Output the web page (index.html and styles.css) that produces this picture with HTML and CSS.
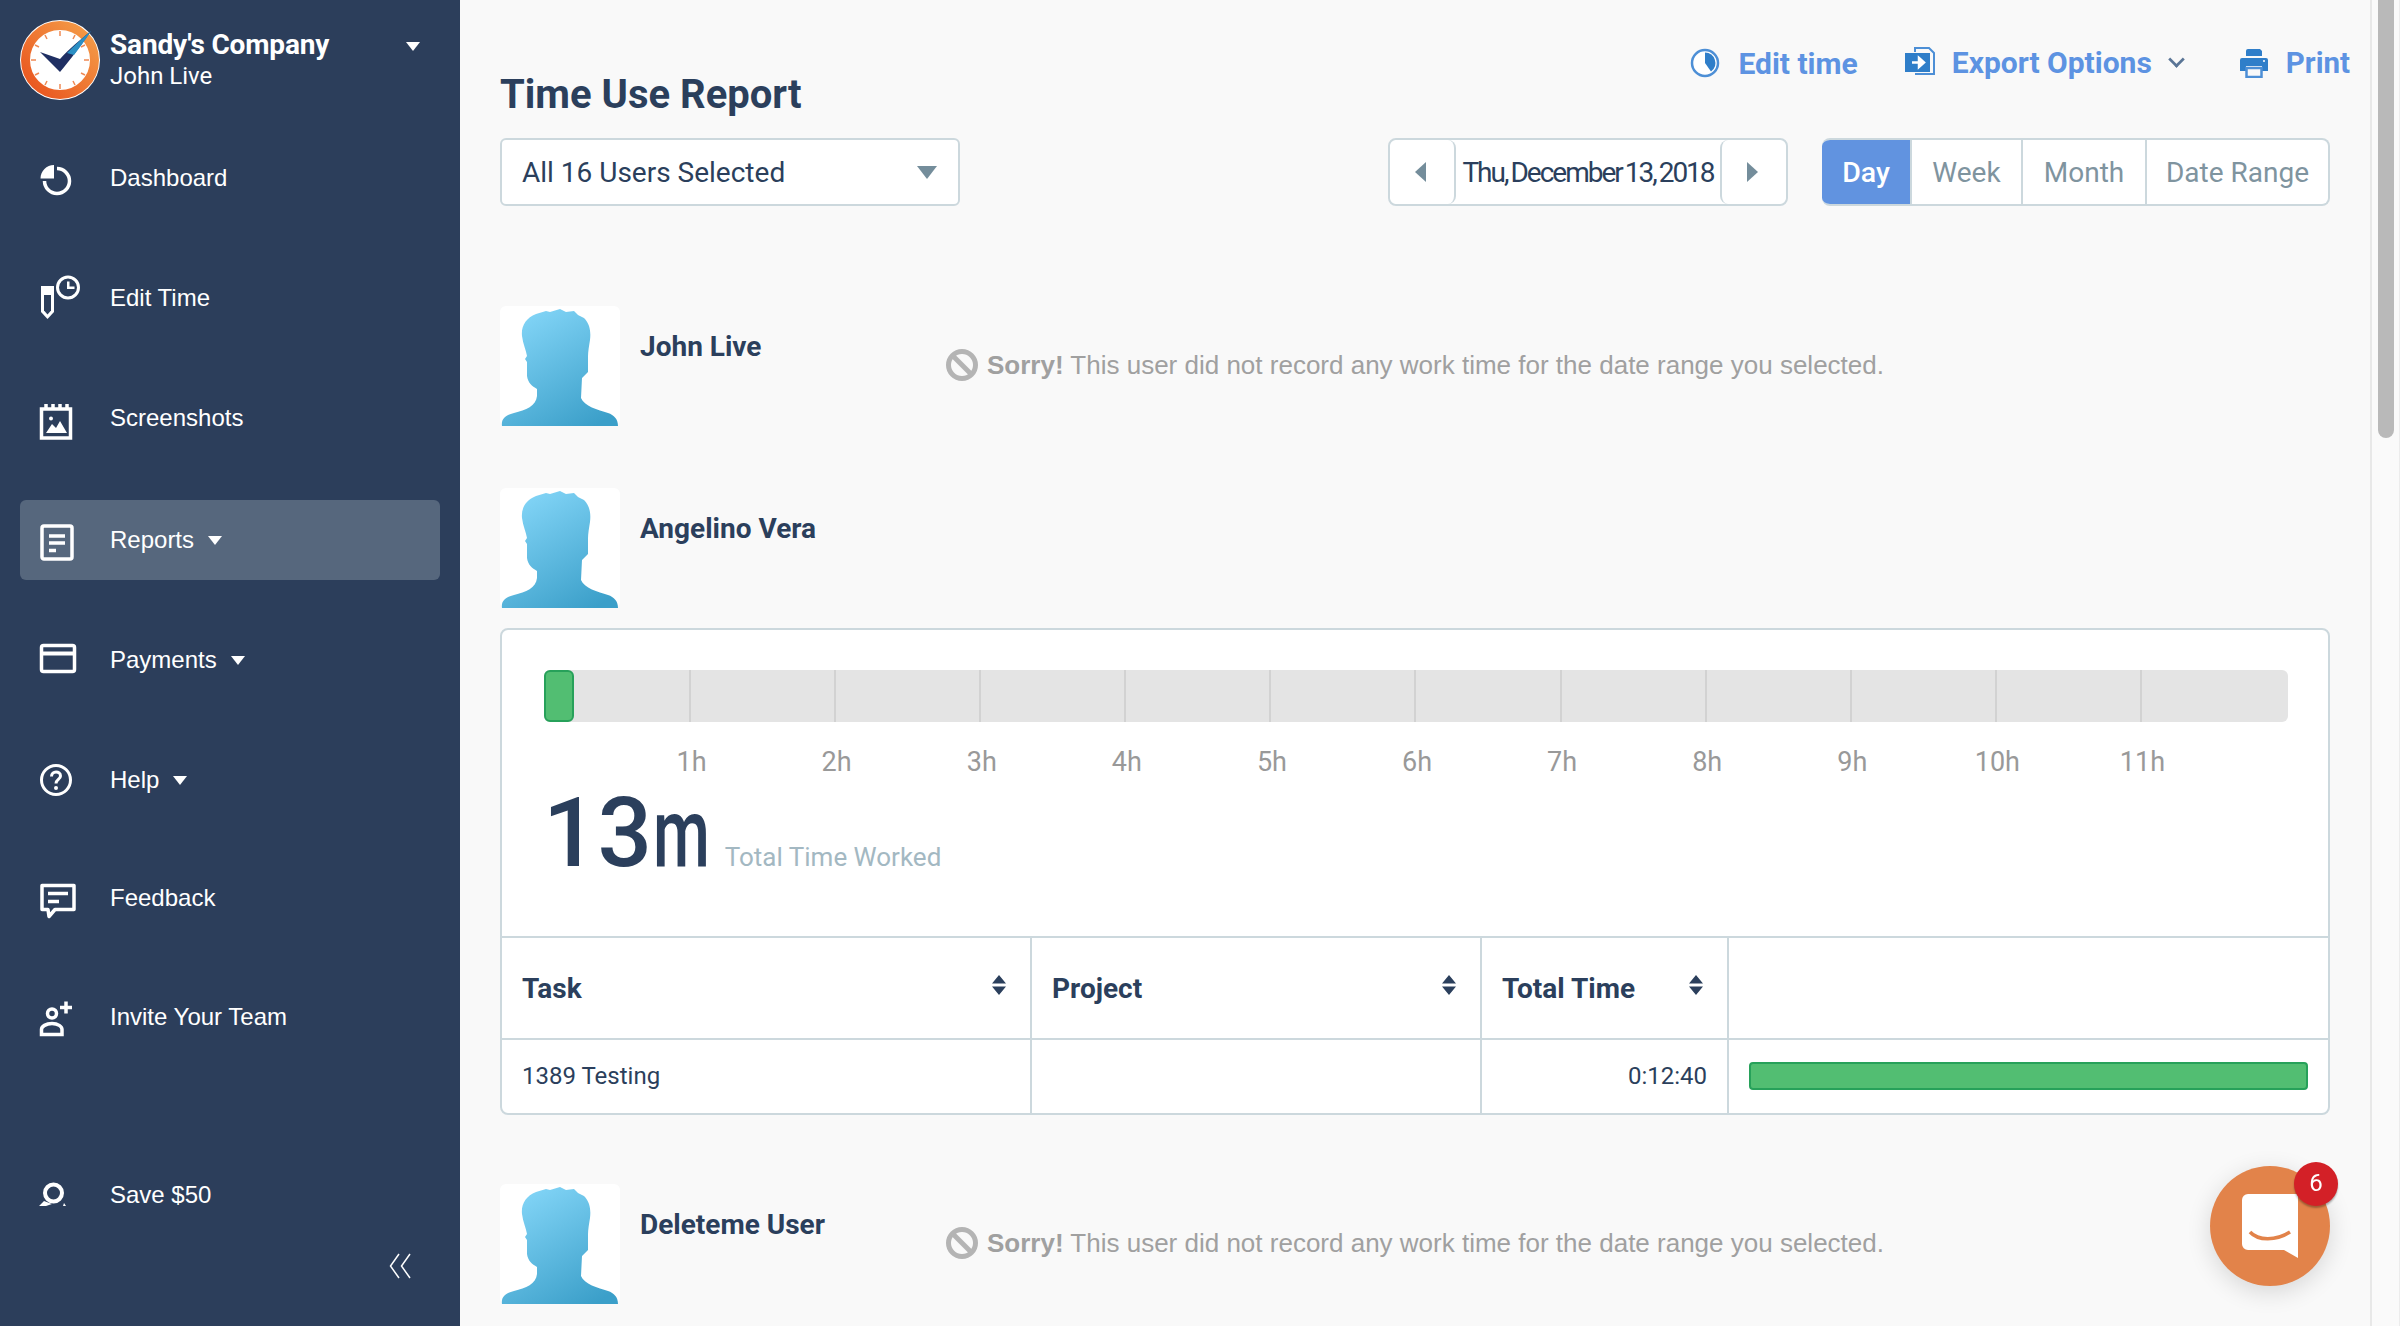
FILE: index.html
```html
<!DOCTYPE html>
<html lang="en">
<head>
<meta charset="UTF-8">
<title>Time Use Report</title>
<link rel="stylesheet" href="styles.css">
</head>
<body>
  <svg class="defs" width="0" height="0">
    <defs>
      <linearGradient id="avatarFill" x1="0.2" y1="0" x2="0.8" y2="1">
        <stop offset="0" stop-color="#84d6f8"/>
        <stop offset="1" stop-color="#3b9fc9"/>
      </linearGradient>
      <linearGradient id="ringFill" x1="0" y1="1" x2="1" y2="0">
        <stop offset="0" stop-color="#e8501c"/>
        <stop offset="1" stop-color="#f5a04a"/>
      </linearGradient>
      <symbol id="avatar" viewBox="0 0 120 120">
        <rect width="120" height="120" rx="6" fill="#fff"/>
        <path fill="url(#avatarFill)" d="M2 120 C1 113 5 109 14 107 C26 104 36 100 37 90 L37 83 C32 80 28 77 27 70 L27 56 L25 53 L27 50 C26 44 23 38 22 30 C21 20 26 12 36 8 L46 5 L50 6 L60 3 L66 6 L74 5 L78 9 L84 12 C90 18 91 26 90 34 C89 40 88 46 88 50 L88 66 L82 72 L81 92 C84 100 98 104 108 107 C114 109 118 113 118 120 Z"/>
      </symbol>
      <symbol id="sort" viewBox="0 0 14 20">
        <path fill="#2b3f5c" d="M7 0 L14 8.500 L0 8.500 Z M0 11.500 L14 11.500 L7 20 Z"/>
      </symbol>
      <symbol id="noEntry" viewBox="0 0 34 34">
        <circle cx="17" cy="17" r="13.500" fill="none" stroke="#b4b4b4" stroke-width="5"/>
        <path d="M8 8 L26 26" stroke="#b4b4b4" stroke-width="5"/>
      </symbol>
    </defs>
  </svg>

  <div class="app">
    <aside class="sidebar">
      <div class="brand">
        <svg class="logo" viewBox="0 0 80 80">
          <circle cx="40" cy="40" r="40" fill="#fff"/>
          <circle cx="40" cy="40" r="34.500" fill="#fff" stroke="url(#ringFill)" stroke-width="9"/>
          <path d="M40 11v5M40 64v5M11 40h5M64 40h5M25 15l2 4M55 15l-2 4M15 25l4 2M65 25l-4 2M15 55l4-2M65 55l-4-2M25 65l2-4M55 65l-2-4" stroke="#ef8a55" stroke-width="1.500"/>
          <path d="M20 32 L40 39 C50 28 60 20 71 11 C60 27 50 40 40 52 Z" fill="#1f2f63"/>
          <path d="M47 33 C55 25 62 18 71 11 C66 19 60 27 54 35 Z" fill="#2b8fc4"/>
        </svg>
        <div class="brand-text">
          <div class="company">Sandy's Company</div>
          <div class="brand-user">John Live</div>
        </div>
        <span class="caret caret-brand"></span>
      </div>

      <nav class="nav">
        <a class="nav-item">
          <svg class="nav-icon" viewBox="0 -2.500 40 40">
            <path d="M4.500 19.500 A12.500 12.500 0 1 0 17 7" fill="none" stroke="#fff" stroke-width="3.500" transform="translate(0 1)"/>
            <path d="M14 4.500 V18 H0.500 C0.500 10.500 6.500 4.500 14 4.500 Z" fill="#fff"/>
          </svg>
          <span>Dashboard</span>
        </a>
        <a class="nav-item">
          <svg class="nav-icon" viewBox="0 0 40 40">
            <path d="M1 8 H14 V34 L7.500 41 L1 34 Z" fill="#fff"/>
            <path d="M4 17 H11 V32.500 L7.500 36.500 L4 32.500 Z" fill="#2c3e5b"/>
            <circle cx="28" cy="9.500" r="10.500" fill="none" stroke="#fff" stroke-width="3"/>
            <path d="M27 3.500 H29.500 V8.500 H34.500 V11 H27 Z" fill="#fff"/>
          </svg>
          <span>Edit Time</span>
        </a>
        <a class="nav-item">
          <svg class="nav-icon" viewBox="0 -5 40 40">
            <path d="M6 1 V5 M13 1 V5 M20 1 V5 M27 1 V5" stroke="#fff" stroke-width="3.500"/>
            <rect x="1.500" y="6" width="29" height="29" fill="none" stroke="#fff" stroke-width="3.500"/>
            <circle cx="11" cy="15.500" r="2" fill="#fff"/>
            <path d="M6 30 L12 21 L16 25 L20 18 L27 30 Z" fill="#fff"/>
          </svg>
          <span>Screenshots</span>
        </a>
        <a class="nav-item active">
          <svg class="nav-icon" viewBox="0 -3 40 40">
            <rect x="2" y="3" width="30" height="33" rx="2" fill="none" stroke="#fff" stroke-width="3.500"/>
            <path d="M9 13 H25 M9 20 H25 M9 27.500 H16" stroke="#fff" stroke-width="3.500"/>
          </svg>
          <span>Reports</span>
          <span class="caret"></span>
        </a>
        <a class="nav-item">
          <svg class="nav-icon" viewBox="0 0 40 40">
            <rect x="1.500" y="5.500" width="33" height="26" rx="2" fill="none" stroke="#fff" stroke-width="3.500"/>
            <path d="M2 13.500 H34" stroke="#fff" stroke-width="4"/>
          </svg>
          <span>Payments</span>
          <span class="caret"></span>
        </a>
        <a class="nav-item">
          <svg class="nav-icon" viewBox="0 0 40 40">
            <circle cx="16" cy="20" r="14.500" fill="none" stroke="#fff" stroke-width="3"/>
            <path d="M11.500 16.500 C11.500 10.500 20.500 10.500 20.500 16 C20.500 19.500 16 19.500 16 23.500" fill="none" stroke="#fff" stroke-width="3"/>
            <circle cx="16" cy="28" r="2" fill="#fff"/>
          </svg>
          <span>Help</span>
          <span class="caret"></span>
        </a>
        <a class="nav-item">
          <svg class="nav-icon" viewBox="0 -2.500 40 40">
            <path d="M2 5 H34 V29 H15 L9 36 L8 29 H2 Z" fill="none" stroke="#fff" stroke-width="3.500" stroke-linejoin="round"/>
            <path d="M8 13 H28 M8 21 H19" stroke="#fff" stroke-width="3.500"/>
          </svg>
          <span>Feedback</span>
        </a>
        <a class="nav-item">
          <svg class="nav-icon" viewBox="0 -1.500 40 40">
            <circle cx="12" cy="15" r="4.500" fill="none" stroke="#fff" stroke-width="3.500"/>
            <path d="M1.500 36 V31 C1.500 28 6 25 12 25 C18 25 22 28 22 31 V36 Z" fill="none" stroke="#fff" stroke-width="3.500"/>
            <path d="M26 3 V15 M20 9 H32" stroke="#fff" stroke-width="3.500"/>
          </svg>
          <span>Invite Your Team</span>
        </a>
      </nav>

      <div class="sidebar-bottom">
        <a class="nav-item">
          <svg class="nav-icon" viewBox="0 0 40 40">
            <circle cx="13.500" cy="18" r="8.500" fill="none" stroke="#fff" stroke-width="4"/>
            <path d="M-1 31 L4 26 L12 29 L6 31 Z M24 28 L26 31 H23 Z" fill="#fff"/>
          </svg>
          <span>Save $50</span>
        </a>
        <svg class="collapse" viewBox="0 0 22 26">
          <path d="M10 1 L1.500 13 L10 25 M21 1 L12.500 13 L21 25" fill="none" stroke="#fff" stroke-width="1.500"/>
        </svg>
      </div>
    </aside>

    <main class="main">
      <div class="page-head">
        <h1 class="title">Time Use Report</h1>
        <div class="actions">
          <a class="action">
            <svg class="action-icon" viewBox="0 0 30 30">
              <circle cx="15" cy="15" r="13" fill="#fff" stroke="#4d8fd6" stroke-width="2.500"/>
              <path d="M15 15 V4.500 A10.500 10.500 0 0 1 21 23.500 Z" fill="#2f7ec9"/>
            </svg>
            Edit time
          </a>
          <a class="action action-export">
            <svg class="action-icon" viewBox="0 0 32 30">
              <path d="M11 5 V1 H25 L30 6 V27 H11" fill="none" stroke="#4d8fd6" stroke-width="2"/>
              <rect x="1" y="6" width="25" height="19" fill="#2f7ec9"/>
              <path d="M8 15.500 H15 M15 11 L20 15.500 L15 20 Z" fill="#fff" stroke="#fff" stroke-width="2.500"/>
            </svg>
            Export Options
            <span class="caret-chevron"></span>
          </a>
          <a class="action action-print">
            <svg class="action-icon" viewBox="0 0 30 30">
              <path d="M7 8 V3 A2 2 0 0 1 9 1 H21 L23 3 V8 Z" fill="#2f7ec9"/>
              <path d="M3 10 H27 A2 2 0 0 1 29 12 V23 H23 V18 H7 V23 H1 V12 A2 2 0 0 1 3 10 Z" fill="#2f7ec9"/>
              <circle cx="25" cy="13" r="1" fill="#fff"/>
              <rect x="7.500" y="20" width="15" height="9" fill="none" stroke="#4d8fd6" stroke-width="2.500"/>
            </svg>
            Print
          </a>
        </div>
      </div>

      <div class="toolbar">
        <div class="user-select">
          All 16 Users Selected
          <span class="select-arrow"></span>
        </div>
        <div class="toolbar-right">
          <div class="date-pick">
            <button class="date-btn"><span class="tri-left"></span></button>
            <span class="date-text">Thu, December 13, 2018</span>
            <button class="date-btn"><span class="tri-right"></span></button>
          </div>
          <div class="ranges">
            <span class="range on">Day</span>
            <span class="range range-week">Week</span>
            <span class="range range-month">Month</span>
            <span class="range range-custom">Date Range</span>
          </div>
        </div>
      </div>

      <section class="user first">
        <svg class="avatar"><use href="#avatar"/></svg>
        <div class="user-name">John Live</div>
        <div class="sorry">
          <svg class="sorry-icon"><use href="#noEntry"/></svg>
          <span><b>Sorry!</b> This user did not record any work time for the date range you selected.</span>
        </div>
      </section>

      <section class="user second">
        <svg class="avatar"><use href="#avatar"/></svg>
        <div class="user-name">Angelino Vera</div>
      </section>

      <div class="card">
        <div class="card-top">
          <div class="timeline">
            <div class="worked"></div>
            <i></i><i></i><i></i><i></i><i></i><i></i><i></i><i></i><i></i><i></i><i></i><i></i>
          </div>
          <div class="hours">
            <span>1h</span><span>2h</span><span>3h</span><span>4h</span><span>5h</span><span>6h</span>
            <span>7h</span><span>8h</span><span>9h</span><span>10h</span><span>11h</span>
          </div>
          <div class="total">
            <span class="total-num">13<span class="total-unit">m</span></span>
            <span class="total-label">Total Time Worked</span>
          </div>
        </div>
        <table class="tasks">
          <thead>
            <tr>
              <th class="col-task">Task<svg class="sort"><use href="#sort"/></svg></th>
              <th class="col-project">Project<svg class="sort"><use href="#sort"/></svg></th>
              <th class="col-time">Total Time<svg class="sort"><use href="#sort"/></svg></th>
              <th></th>
            </tr>
          </thead>
          <tbody>
            <tr>
              <td>1389 Testing</td>
              <td></td>
              <td class="num">0:12:40</td>
              <td><div class="task-bar"></div></td>
            </tr>
          </tbody>
        </table>
      </div>

      <section class="user third">
        <svg class="avatar"><use href="#avatar"/></svg>
        <div class="user-name">Deleteme User</div>
        <div class="sorry">
          <svg class="sorry-icon"><use href="#noEntry"/></svg>
          <span><b>Sorry!</b> This user did not record any work time for the date range you selected.</span>
        </div>
      </section>
    </main>

    <div class="scrollbar"><div class="thumb"></div></div>
  </div>

  <div class="chat">
    <svg class="chat-icon" viewBox="0 0 56 64">
      <path d="M6 0 H56 V64 L42 56 H6 A6 6 0 0 1 0 50 V6 A6 6 0 0 1 6 0 Z" fill="#fff"/>
      <path d="M8 38 C16 47 34 47 48 38" fill="none" stroke="#e2834a" stroke-width="3.500"/>
    </svg>
    <span class="chat-badge">6</span>
  </div>
</body>
</html>
```

FILE: styles.css
```css
html, body {
  margin: 0;
  padding: 0;
  height: 100%;
  overflow: hidden;
}

body {
  font-family: Roboto, "Liberation Sans", sans-serif;
  color: #2b3f5c;
  background-color: #f9f9f9;
}

.defs {
  position: absolute;
}

.app {
  display: flex;
  height: 1326px;
}

/* sidebar */
.sidebar {
  width: 460px;
  flex-shrink: 0;
  background-color: #2c3e5b;
  color: #fff;
  display: flex;
  flex-direction: column;
}

.brand {
  display: flex;
  align-items: center;
  height: 80px;
  margin: 20px 0 38px 20px;
}

.logo {
  width: 80px;
  height: 80px;
  flex-shrink: 0;
}

.brand-text {
  margin: -2px 0 0 10px;
  width: 296px;
}

.company {
  font-size: 28px;
  font-weight: 700;
  letter-spacing: -.15px;
  line-height: 34px;
}

.brand-user {
  font-size: 24px;
  line-height: 28px;
}

.caret {
  display: inline-block;
  width: 0;
  height: 0;
  margin-left: 14px;
  border-left: 7px solid transparent;
  border-right: 7px solid transparent;
  border-top: 9px solid #fff;
}

.caret-brand {
  margin: 0 0 27px;
}

.nav-item {
  display: flex;
  align-items: center;
  height: 80px;
  margin: 0 20px 40px;
  padding-left: 20px;
  border-radius: 6px;
  font-family: "Liberation Sans", Arial, sans-serif;
  font-size: 24px;
}

.nav .nav-item:nth-child(3) {
  margin-bottom: 42px;
}

.nav .nav-item:nth-child(6) {
  margin-bottom: 38px;
}

.nav .nav-item:nth-child(7) {
  margin-bottom: 39px;
}

.nav-item.active {
  background-color: #56677d;
}

.nav-icon {
  width: 40px;
  height: 40px;
  margin-right: 30px;
  flex-shrink: 0;
  overflow: visible;
}

.sidebar-bottom {
  margin-top: 58px;
}

.sidebar-bottom .nav-item {
  margin-bottom: 0;
}

.collapse {
  display: block;
  width: 22px;
  height: 26px;
  margin: 18px 0 0 389px;
}

/* main */
.main {
  flex: 1;
  min-width: 0;
  padding: 0 40px;
}

.page-head {
  display: flex;
  justify-content: space-between;
  height: 138px;
}

.title {
  margin: 71px 0 0;
  font-size: 40px;
  line-height: 48px;
  font-weight: 700;
}

.actions {
  display: flex;
  margin: 42px -20px 0 0;
  height: 42px;
}

.action {
  display: flex;
  align-items: center;
  margin-left: 46px;
  font-size: 30px;
  font-weight: 700;
  color: #5d93e2;
}

.action-export {
  margin-top: -2px;
}

.action-export .action-icon {
  width: 32px;
  margin-right: 16px;
}

.action-print {
  margin-left: 56px;
  font-size: 29.500px;
}

.action-icon {
  width: 30px;
  height: 30px;
  margin-right: 18px;
}

.action-print .action-icon {
  margin-right: 17px;
}

.caret-chevron {
  width: 10px;
  height: 10px;
  margin: -6px 0 0 18px;
  border-right: 3px solid #5a7596;
  border-bottom: 3px solid #5a7596;
  transform: rotate(45deg) scale(.9);
}

.toolbar {
  display: flex;
  justify-content: space-between;
  height: 68px;
}

.user-select {
  display: flex;
  align-items: center;
  justify-content: space-between;
  box-sizing: border-box;
  width: 460px;
  padding: 0 21px 0 20px;
  background-color: #fff;
  border: 2px solid #ccd8dd;
  border-radius: 6px;
  font-size: 28px;
}

.select-arrow {
  width: 0;
  height: 0;
  border-left: 10px solid transparent;
  border-right: 10px solid transparent;
  border-top: 13px solid #748d9b;
}

.toolbar-right {
  display: flex;
  gap: 34px;
}

.date-pick {
  display: flex;
  align-items: center;
  box-sizing: border-box;
  width: 400px;
  background-color: #fff;
  border: 2px solid #ccd8dd;
  border-radius: 8px;
}

.date-btn {
  display: flex;
  align-items: center;
  justify-content: center;
  box-sizing: border-box;
  width: 66px;
  height: 64px;
  padding: 0 3px 0 0;
  margin: 0;
  background-color: #fff;
  border: 0 solid #ccd8dd;
  border-radius: 8px;
  flex-shrink: 0;
}

.date-btn:first-child {
  border-right-width: 2px;
}

.date-btn:last-child {
  border-left-width: 2px;
}

.date-text {
  flex: 1;
  min-width: 0;
  text-align: center;
  white-space: nowrap;
  font-size: 28px;
  letter-spacing: -2px;
  word-spacing: -2px;
}

.tri-left,
.tri-right {
  width: 0;
  height: 0;
  border-top: 10px solid transparent;
  border-bottom: 10px solid transparent;
}

.tri-left {
  border-right: 11px solid #748d9b;
}

.tri-right {
  border-left: 11px solid #748d9b;
}

.ranges {
  display: flex;
  box-sizing: border-box;
  width: 508px;
  background-color: #fff;
  border: 2px solid #ccd8dd;
  border-left: 0;
  border-radius: 8px;
  overflow: hidden;
}

.range {
  display: flex;
  align-items: center;
  justify-content: center;
  box-sizing: border-box;
  flex: none;
  white-space: nowrap;
  border-left: 2px solid #ccd8dd;
  font-size: 28px;
  color: #7f949f;
}

.range-week {
  width: 111px;
}

.range-month {
  width: 124px;
}

.range-custom {
  width: 183px;
}

.range.on {
  margin: -2px 0;
  width: 88px;
  border-left: 0;
  background-color: #6193e0;
  color: #fff;
  font-size: 28.500px;
  font-weight: 500;
}

/* users */
.user {
  display: flex;
  height: 120px;
}

.user.first {
  margin-top: 100px;
}

.user.second {
  margin-top: 62px;
}

.user.third {
  margin-top: 69px;
}

.avatar {
  width: 120px;
  height: 120px;
  flex-shrink: 0;
}

.user-name {
  width: 305px;
  margin: 24px 0 0 20px;
  font-size: 28px;
  line-height: 34px;
  font-weight: 700;
  white-space: nowrap;
}

.sorry {
  display: flex;
  align-items: center;
  margin-top: 42px;
  height: 34px;
  font-family: "Liberation Sans", Arial, sans-serif;
  font-size: 26px;
  color: #a0a0a0;
  white-space: nowrap;
}

.sorry-icon {
  width: 34px;
  height: 34px;
  margin-right: 8px;
}

/* card */
.card {
  box-sizing: border-box;
  width: 1830px;
  height: 487px;
  margin-top: 20px;
  background-color: #fff;
  border: 2px solid #ccd8dd;
  border-radius: 8px;
  overflow: hidden;
}

.card-top {
  height: 306px;
  padding: 40px 40px 0 42px;
  box-sizing: border-box;
}

.timeline {
  position: relative;
  display: flex;
  height: 52px;
  background-color: #e4e4e4;
  border-radius: 6px;
}

.timeline i {
  flex: 0 0 145.100px;
  box-sizing: border-box;
  border-right: 2px solid #d2d2d2;
}

.timeline i:first-of-type {
  flex-basis: 147px;
}

.timeline i:last-child {
  flex: 1;
  border-right: 0;
}

.worked {
  position: absolute;
  left: 0;
  top: 0;
  box-sizing: border-box;
  width: 30px;
  height: 52px;
  background-color: #52be72;
  border: 2px solid #27a15a;
  border-radius: 6px;
}

.hours {
  display: flex;
  padding-left: 75px;
  margin-top: 24px;
  font-size: 27px;
  line-height: 32px;
  color: #999;
}

.hours span {
  width: 145.100px;
  text-align: center;
}

.total {
  display: flex;
  align-items: baseline;
  margin-top: 5px;
  line-height: 100px;
}

.total-num {
  font-size: 96px;
  font-weight: 500;
  margin-left: -1px;
}

.total-unit {
  display: inline-block;
  transform: scaleX(.68);
  transform-origin: left;
  margin-right: -24px;
  margin-left: 1px;
}

.total-label {
  margin-left: 12px;
  font-size: 26px;
  color: #a3b8c2;
}

.tasks {
  width: 100%;
  border-collapse: collapse;
  table-layout: fixed;
}

.tasks th,
.tasks td {
  padding: 0 20px;
  border-top: 2px solid #ccd8dd;
  border-left: 2px solid #ccd8dd;
  text-align: left;
}

.tasks th:first-child,
.tasks td:first-child {
  border-left: 0;
}

.tasks th {
  height: 102px;
  box-sizing: border-box;
  font-size: 28px;
  font-weight: 700;
  position: relative;
}

.tasks td {
  height: 71px;
  padding-bottom: 4px;
  font-size: 24px;
}

.col-task {
  width: 529px;
}

.col-project {
  width: 450px;
}

.col-time {
  width: 247px;
}

.sort {
  position: absolute;
  right: 24px;
  top: 37px;
  width: 14px;
  height: 20px;
}

.tasks td.num {
  text-align: right;
  padding-right: 20px;
}

.task-bar {
  height: 28px;
  box-sizing: border-box;
  background-color: #52be72;
  border: 2px solid #27a15a;
  border-radius: 4px;
}

/* fake scrollbar */
.scrollbar {
  box-sizing: border-box;
  width: 30px;
  flex-shrink: 0;
  background-color: #fafafa;
  border-left: 2px solid #e8e8e8;
  border-right: 1px solid #ececec;
}

.thumb {
  width: 16px;
  height: 438px;
  margin-left: 6px;
  background-color: #b9b9b9;
  border-radius: 0 0 8px 8px;
}

/* chat bubble */
.chat {
  position: fixed;
  left: 2210px;
  top: 1166px;
  width: 120px;
  height: 120px;
  background-color: #e2834a;
  border-radius: 50%;
  box-shadow: 0 6px 24px rgba(0,0,0,.14);
}

.chat-icon {
  position: absolute;
  left: 32px;
  top: 28px;
  width: 56px;
  height: 64px;
}

.chat-badge {
  position: absolute;
  left: 84px;
  top: -4px;
  width: 44px;
  height: 44px;
  line-height: 42px;
  text-align: center;
  background-color: #d32027;
  border-radius: 50%;
  color: #fff;
  font-size: 24px;
  box-shadow: 0 2px 2px rgba(0,0,0,.3);
}
```
